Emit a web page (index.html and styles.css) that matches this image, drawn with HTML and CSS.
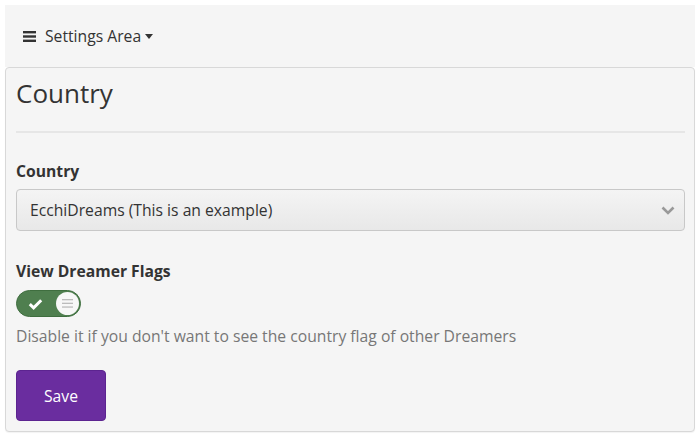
FILE: index.html
```html
<!DOCTYPE html>
<html>
<head>
<meta charset="utf-8">
<link rel="stylesheet" href="styles.css">
</head>
<body>
<div class="page">
  <nav class="navbar">
    <span class="menu-btn">
      <svg class="bars" width="13" height="11" viewBox="0 0 13 11"><rect x="0" y="0" width="13" height="2.4" fill="#333"/><rect x="0" y="4.3" width="13" height="2.4" fill="#333"/><rect x="0" y="8.6" width="13" height="2.4" fill="#333"/></svg>
      <span class="nav-text">Settings Area</span>
      <span class="caret"></span>
    </span>
  </nav>
  <section class="panel">
    <h1 class="title">Country</h1>
    <hr class="sep">
    <div class="group">
      <label class="label">Country</label>
      <div class="select">
        <span>EcchiDreams (This is an example)</span>
        <svg class="chev" width="14" height="9" viewBox="0 0 14 9"><path d="M1.5 1.5 L7 7 L12.5 1.5" fill="none" stroke="#999" stroke-width="2.6"/></svg>
      </div>
    </div>
    <div class="group group-last">
      <label class="label">View Dreamer Flags</label>
      <div class="toggle">
        <svg class="check" width="15" height="12" viewBox="0 0 15 12"><path d="M1.8 6.2 L5.6 9.8 L13.2 2.2" fill="none" stroke="#fff" stroke-width="3"/></svg>
        <span class="knob">
          <svg width="11" height="9" viewBox="0 0 11 9"><rect x="0" y="0" width="11" height="1.3" fill="#bbb"/><rect x="0" y="3.7" width="11" height="1.3" fill="#bbb"/><rect x="0" y="7.4" width="11" height="1.3" fill="#bbb"/></svg>
        </span>
      </div>
      <p class="help">Disable it if you don't want to see the country flag of other Dreamers</p>
    </div>
    <button class="btn">Save</button>
  </section>
</div>
</body>
</html>
```
FILE: styles.css
```css
* { box-sizing: border-box; }
html, body { margin: 0; padding: 0; background: #fff; }
body {
  font-family: "Open Sans", "DejaVu Sans", sans-serif;
  color: #333;
  font-size: 15.7px;
}
.page {
  padding: 5px;
  display: flex;
  flex-direction: column;
}
.navbar {
  background: #f5f5f5;
  height: 62px;
  display: flex;
  align-items: center;
  padding-left: 18px;
}
.menu-btn {
  display: flex;
  align-items: center;
}
.bars { margin-right: 9px; }
.nav-text { font-size: 15.7px; color: #333; }
.caret {
  width: 0; height: 0;
  border-left: 4.5px solid transparent;
  border-right: 4.5px solid transparent;
  border-top: 5px solid #333;
  margin-left: 4px;
  margin-top: 1px;
}
.panel {
  background: #f5f5f5;
  border: 1px solid #d8d8d8;
  border-radius: 4px;
  padding: 10px 9px 10px 10px;
  box-shadow: 0 1px 1px rgba(0,0,0,0.05);
}
.title {
  margin: 0;
  font-size: 26px;
  font-weight: 400;
  line-height: 30px;
}
.sep {
  border: 0;
  border-top: 2px solid #e6e6e6;
  margin: 23px 0 27px;
}
.group { margin-bottom: 29px; }
.group-last { margin-bottom: 23px; }
.label {
  display: block;
  font-weight: 700;
  font-size: 15.7px;
  line-height: 22px;
  margin-bottom: 7px;
}
.select {
  height: 42px;
  border: 1px solid #c8c8c8;
  border-radius: 4px;
  background: linear-gradient(#f4f4f4, #e8e8e8);
  display: flex;
  align-items: center;
  justify-content: space-between;
  padding: 0 9px 0 13px;
  font-size: 15.7px;
  color: #333;
}
.chev { margin-top: 1px; }
.toggle {
  margin-top: 8px;
  width: 65px;
  height: 27px;
  border-radius: 14px;
  background: #4f7f4f;
  border: 1px solid #3f6e3f;
  display: flex;
  align-items: center;
  justify-content: space-between;
  padding: 0 1px 0 11px;
}
.knob {
  width: 23px;
  height: 23px;
  border-radius: 50%;
  background: #f7f7f7;
  display: flex;
  align-items: center;
  justify-content: center;
}
.help {
  margin: 8px 0 0;
  color: #777;
  font-size: 15.7px;
  line-height: 22px;
}
.btn {
  align-self: flex-start;
  width: 90px;
  height: 51px;
  border: 1px solid #5c2490;
  border-radius: 4px;
  background: #6a2d9f;
  color: #fff;
  font-family: "Open Sans", "DejaVu Sans", sans-serif;
  font-size: 15.7px;
  padding: 0;
  margin: 0;
  display: block;
}
```
